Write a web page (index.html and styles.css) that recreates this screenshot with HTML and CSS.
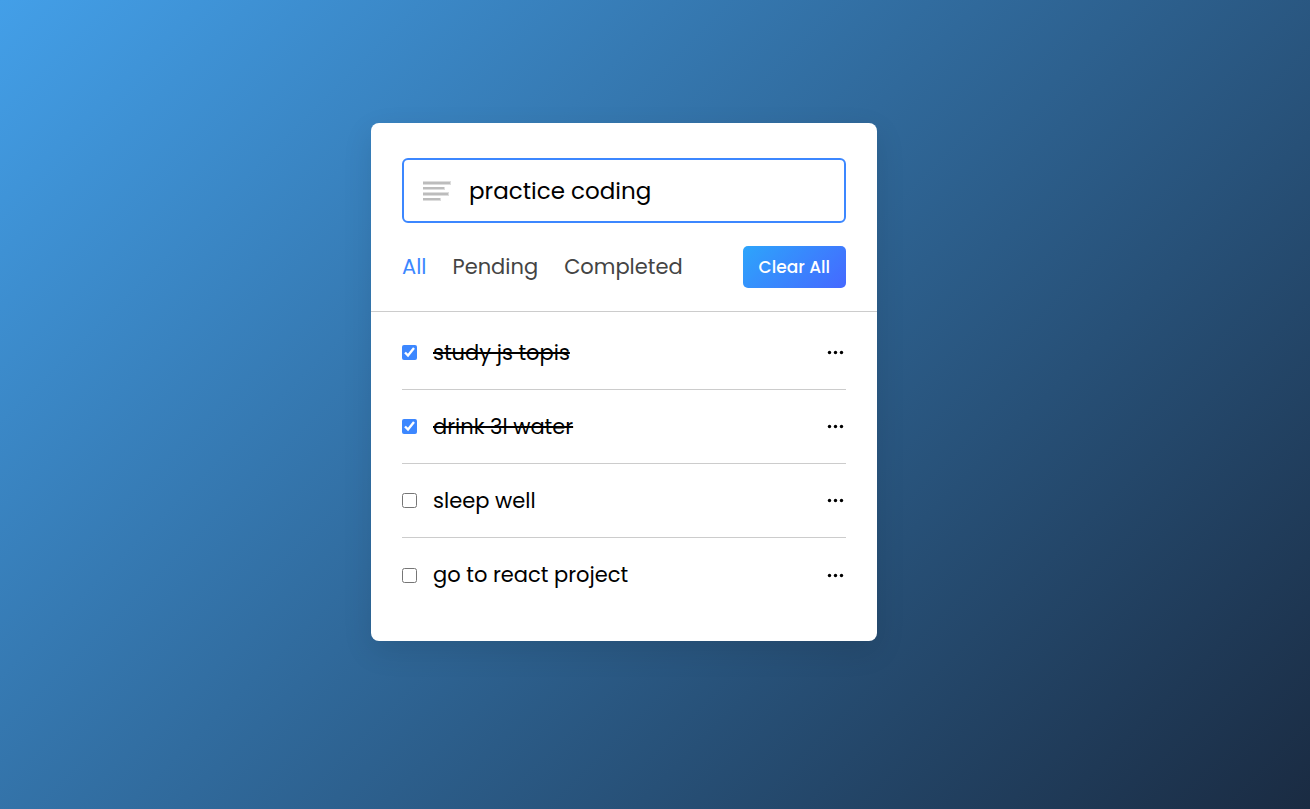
FILE: index.html
```html
<!DOCTYPE html>
<html lang="en">
<head>
<meta charset="utf-8">
<meta name="viewport" content="width=device-width, initial-scale=1">
<title>Todo List</title>
<link rel="stylesheet" href="styles.css">
</head>
<body>
<main class="wrapper">
  <label class="task-input">
    <svg class="bars-icon" viewBox="0 0 28 20" aria-hidden="true">
      <path fill="#ddd" d="M0 0h28v4H0zM0 6h22v3H0zM0 11h26v4H0zM0 17h18v3H0z"/>
      <path fill="#bcbcbc" d="M0 1h27v2H0zM0 6h21v2H0zM0 12h25v2H0zM0 17h17v2H0z"/>
    </svg>
    <input class="task-field" type="text" aria-label="Add a new task" value="practice coding">
  </label>
  <div class="controls">
    <nav class="filters" aria-label="Filter tasks">
      <a class="filter active" href="#all">All</a>
      <a class="filter" href="#pending">Pending</a>
      <a class="filter" href="#completed">Completed</a>
    </nav>
    <button class="clear-btn" type="button">Clear All</button>
  </div>
  <ul class="task-box">
    <li class="task">
      <label class="task-label"><input class="check" type="checkbox" checked><span class="task-text">study js topis</span></label>
      <button class="more" type="button" aria-label="Options"><svg class="dots" viewBox="0 0 17 5" aria-hidden="true"><circle cx="2.500" cy="2.500" r="1.700"/><circle cx="8.500" cy="2.500" r="1.700"/><circle cx="14.500" cy="2.500" r="1.700"/></svg></button>
    </li>
    <li class="task">
      <label class="task-label"><input class="check" type="checkbox" checked><span class="task-text">drink 3l water</span></label>
      <button class="more" type="button" aria-label="Options"><svg class="dots" viewBox="0 0 17 5" aria-hidden="true"><circle cx="2.500" cy="2.500" r="1.700"/><circle cx="8.500" cy="2.500" r="1.700"/><circle cx="14.500" cy="2.500" r="1.700"/></svg></button>
    </li>
    <li class="task">
      <label class="task-label"><input class="check" type="checkbox"><span class="task-text">sleep well</span></label>
      <button class="more" type="button" aria-label="Options"><svg class="dots" viewBox="0 0 17 5" aria-hidden="true"><circle cx="2.500" cy="2.500" r="1.700"/><circle cx="8.500" cy="2.500" r="1.700"/><circle cx="14.500" cy="2.500" r="1.700"/></svg></button>
    </li>
    <li class="task">
      <label class="task-label"><input class="check" type="checkbox"><span class="task-text">go to react project</span></label>
      <button class="more" type="button" aria-label="Options"><svg class="dots" viewBox="0 0 17 5" aria-hidden="true"><circle cx="2.500" cy="2.500" r="1.700"/><circle cx="8.500" cy="2.500" r="1.700"/><circle cx="14.500" cy="2.500" r="1.700"/></svg></button>
    </li>
  </ul>
</main>
</body>
</html>
```
FILE: styles.css
```css
* {
  box-sizing: border-box;
  margin: 0;
  padding: 0;
  font-family: Poppins, Inter, "Open Sans", sans-serif;
}

body {
  min-height: 100vh;
  padding: 123px 62px 24px 0;
  background: linear-gradient(135deg, #439fe8, #1a2b42) no-repeat;
}

.wrapper {
  width: 100%;
  max-width: 506px;
  margin: 0 auto;
  padding: 35px 0 29px;
  background: #fff;
  border-radius: 8px;
  box-shadow: 0 10px 30px rgba(0, 0, 0, 0.1);
}

.task-input {
  display: flex;
  align-items: center;
  gap: 18px;
  height: 65px;
  margin: 0 31px;
  padding: 0 19px;
  border: 2px solid #3c87ff;
  border-radius: 6px;
}

.bars-icon {
  flex: none;
  width: 28px;
  height: 20px;
}

.task-field {
  flex: 1;
  min-width: 0;
  border: 0;
  outline: 0;
  background: none;
  color: #000;
  font-size: 23px;
}

.controls {
  display: flex;
  align-items: center;
  justify-content: space-between;
  padding: 23px 31px;
  border-bottom: 1px solid #ccc;
}

.filters {
  display: flex;
  gap: 26px;
}

.filter {
  color: #444;
  font-size: 21px;
  line-height: 32px;
  text-decoration: none;
}

.filter.active {
  color: #3c87ff;
}

.clear-btn {
  height: 42px;
  padding: 0 16px;
  border: 0;
  border-radius: 5px;
  background: linear-gradient(135deg, #2da5fb 0%, #4568ff 100%);
  color: #fff;
  font-size: 17px;
  font-weight: 500;
}

.task-box {
  list-style: none;
  padding: 4px 31px 0;
}

.task {
  display: flex;
  align-items: center;
  justify-content: space-between;
  height: 74px;
  border-bottom: 1px solid #ccc;
}

.task:last-child {
  border-bottom: 0;
}

.task-label {
  display: flex;
  align-items: center;
  gap: 16px;
}

.check {
  width: 15px;
  height: 15px;
  accent-color: #3c87ff;
}

.task-text {
  color: #000;
  font-size: 21px;
  line-height: 32px;
}

.check:checked + .task-text {
  text-decoration: line-through;
}

.more {
  display: flex;
  padding: 8px 2px;
  border: 0;
  background: none;
}

.dots {
  width: 17px;
  height: 5px;
}
```
